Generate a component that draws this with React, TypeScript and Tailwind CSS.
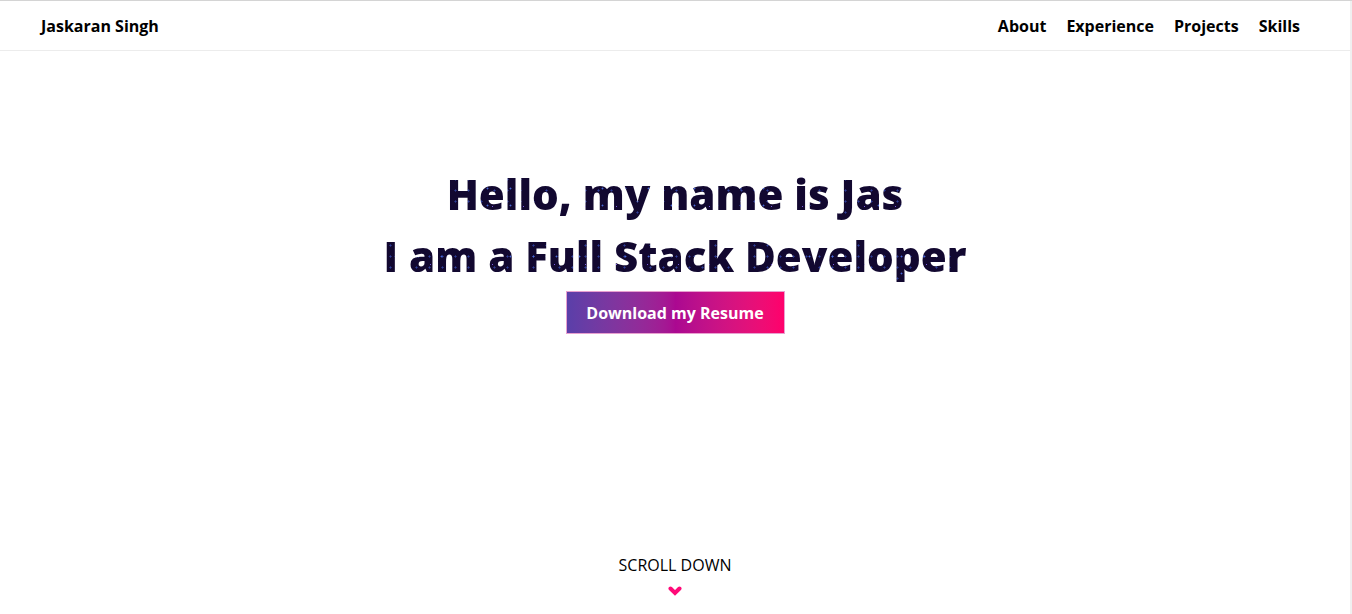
import React from "react";

function Chevron() {
  return (
    <svg width="14" height="11" viewBox="0 0 14 11" className="mt-[9px]">
      <polyline
        points="2.5,2.5 7,7 11.5,2.5"
        fill="none"
        stroke="#ff0a78"
        strokeWidth="4"
        strokeLinecap="round"
        strokeLinejoin="miter"
      />
    </svg>
  );
}

export default function App() {
  return (
    <div
      className="h-[614px] w-full overflow-hidden bg-white border-t border-[#d4d4d4] flex flex-col"
      style={{ fontFamily: '"Open Sans", "Liberation Sans", sans-serif' }}
    >
      <div className="flex flex-1 flex-col border-r-2 border-[#f0f0f0]">
        <nav className="h-[50px] flex items-center justify-between border-b border-[#ececec] pl-[41px] pr-[50px]">
          <span className="text-[16px] font-bold text-black">Jaskaran Singh</span>
          <ul className="flex gap-[20px] text-[16px] font-bold text-black">
            <li>About</li>
            <li>Experience</li>
            <li>Projects</li>
            <li>Skills</li>
          </ul>
        </nav>
        <main className="flex flex-1 flex-col items-center">
          <h1 className="mt-[112px] text-center text-[42px] leading-[62px] font-extrabold text-transparent bg-clip-text bg-[#120830] bg-[radial-gradient(circle,#4a6ad8_0.7px,transparent_1.2px),radial-gradient(circle,#7a5be0_0.6px,transparent_1px),radial-gradient(circle,#2f3f9a_0.8px,transparent_1.3px)] bg-[length:23px_17px,31px_29px,13px_11px]">
            Hello, my name is Jas
            <br />I am a Full Stack Developer
          </h1>
          <button className="mt-[4px] h-[43px] w-[219px] border border-[#e8a0d0] bg-gradient-to-r from-[#5a3fa9] via-[#ab0891] to-[#ff006b] text-[16px] font-bold text-white">
            Download my Resume
          </button>
          <div className="mt-auto mb-[17px] flex flex-col items-center">
            <span className="text-[16px] leading-[24px] text-black">SCROLL DOWN</span>
            <Chevron />
          </div>
        </main>
      </div>
    </div>
  );
}
